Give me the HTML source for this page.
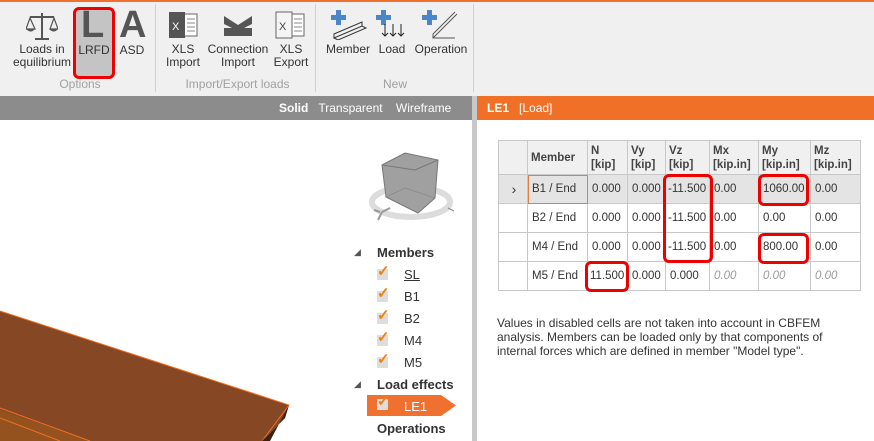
<!DOCTYPE html>
<html><head><meta charset="utf-8"><style>
*{margin:0;padding:0;box-sizing:border-box}
body{width:874px;height:441px;overflow:hidden;background:#fff;font-family:"Liberation Sans",sans-serif;font-size:12px;color:#333;position:relative}
.a{position:absolute}
.tb{left:0;top:0;width:874px;height:96px;background:#f0f0f0;border-top:2px solid #f07030}
.lbl{position:absolute;text-align:center;font-size:12px;color:#333;line-height:13px;white-space:nowrap}
.grp{position:absolute;top:77px;font-size:12px;color:#a0a0a0;text-align:center}
.sep{position:absolute;top:4px;width:1px;height:88px;background:#d0d0d0}
table{border-collapse:collapse;position:absolute;left:498px;top:140px;font-size:11.5px;table-layout:fixed;width:362px}
td{border:1px solid #c8c8c8;padding:0 2px 0 4px;height:29px;white-space:nowrap;color:#333;overflow:hidden}
th{border:1px solid #c8c8c8;background:#f0f0f0;text-align:left;padding:2px 3px;font-weight:bold;color:#444;height:34px;line-height:14px;font-size:11.5px;overflow:hidden;white-space:nowrap}
.sel td{background:#e4e4e4}
.i{color:#999;font-style:italic}
.r{position:absolute;border:3px solid #e00;border-radius:6px}
.tree{position:absolute;font-size:13px;color:#333}
.cb{position:absolute;width:11px;height:11px;background:#ddd;border-radius:1px}
.ck{position:absolute;color:#f08010;font-size:15px;font-weight:bold;line-height:14px}
</style></head><body>
<div class="a tb"></div>
<svg class="a" style="left:26px;top:12px" width="32" height="30" viewBox="0 0 32 30"><g stroke="#555" stroke-width="2" fill="none"><line x1="16" y1="1" x2="16" y2="27"/><line x1="4" y1="5" x2="28" y2="5"/><line x1="9" y1="27" x2="23" y2="27"/><path d="M4 6 L0 17 H9 Z M28 6 L24 17 H32 Z" stroke-width="1.2"/></g><path d="M0 17 H9 Q5 22 0 17 Z M23 17 H32 Q28 22 23 17Z" fill="#555"/></svg>
<div class="lbl" style="left:10px;top:43px;width:64px">Loads in<br>equilibrium</div>
<div class="a" style="left:73px;top:7px;width:42px;height:72px;background:#c4c4c4;border:3px solid #e00;border-radius:6px"></div>
<div class="a" style="left:81px;top:4px;font-size:38px;font-weight:bold;color:#555">L</div>
<div class="lbl" style="left:76px;top:44px;width:36px">LRFD</div>
<div class="a" style="left:119px;top:4px;font-size:38px;font-weight:bold;color:#555">A</div>
<div class="lbl" style="left:118px;top:44px;width:28px">ASD</div>
<div class="grp" style="left:40px;width:80px">Options</div>
<div class="sep" style="left:155px"></div>
<svg class="a" style="left:167px;top:11px" width="32" height="28"><rect x="10" y="3" width="20" height="22" fill="#fff" stroke="#666"/><g stroke="#888"><line x1="20" y1="8" x2="28" y2="8"/><line x1="20" y1="12" x2="28" y2="12"/><line x1="20" y1="16" x2="28" y2="16"/><line x1="20" y1="20" x2="28" y2="20"/></g><rect x="2" y="1" width="16" height="26" fill="#555"/><text x="5" y="19" fill="#fff" font-size="11" font-family="Liberation Sans">X</text></svg>
<div class="lbl" style="left:163px;top:43px;width:40px">XLS<br>Import</div>
<svg class="a" style="left:222px;top:14px" width="32" height="22"><path d="M2 2 L16 11 L30 2 L30 10 L16 17 L2 10Z" fill="#555"/><rect x="2" y="14" width="28" height="8" fill="#555"/></svg>
<div class="lbl" style="left:205px;top:43px;width:66px">Connection<br>Import</div>
<svg class="a" style="left:274px;top:11px" width="32" height="28"><rect x="10" y="3" width="20" height="22" fill="#fff" stroke="#666"/><g stroke="#888"><line x1="20" y1="8" x2="28" y2="8"/><line x1="20" y1="12" x2="28" y2="12"/><line x1="20" y1="16" x2="28" y2="16"/><line x1="20" y1="20" x2="28" y2="20"/></g><rect x="2" y="1" width="16" height="26" fill="#f4f4f4" stroke="#666"/><text x="5" y="19" fill="#444" font-size="11" font-family="Liberation Sans">X</text></svg>
<div class="lbl" style="left:271px;top:43px;width:40px">XLS<br>Export</div>
<div class="grp" style="left:175px;width:125px">Import/Export loads</div>
<div class="sep" style="left:315px"></div>
<svg class="a" style="left:330px;top:8px" width="40" height="32"><path d="M6 2h5v5h5v5h-5v5h-5v-5h-5v-5h5z" fill="#4a86c8"/><path d="M4 30 L32 18 L36 20 L8 32Z M4 30 L4 26 L32 14 L32 18" fill="none" stroke="#333"/></svg>
<div class="lbl" style="left:324px;top:43px;width:48px">Member</div>
<svg class="a" style="left:375px;top:8px" width="32" height="32"><path d="M6 2h5v5h5v5h-5v5h-5v-5h-5v-5h5z" fill="#4a86c8"/><g stroke="#222" fill="none"><path d="M10 16v12M7 25l3 3 3-3M18 16v12M15 25l3 3 3-3M26 16v12M23 25l3 3 3-3"/></g></svg>
<div class="lbl" style="left:376px;top:43px;width:32px">Load</div>
<svg class="a" style="left:421px;top:8px" width="40" height="32"><path d="M6 2h5v5h5v5h-5v5h-5v-5h-5v-5h5z" fill="#4a86c8"/><path d="M12 30 L36 6 M12 26 L34 4 M12 26 V30 H34" fill="none" stroke="#555"/></svg>
<div class="lbl" style="left:413px;top:43px;width:56px">Operation</div>
<div class="grp" style="left:370px;width:50px">New</div>
<div class="sep" style="left:473px"></div>
<div class="a" style="left:0;top:96px;width:472px;height:24px;background:#8c8c8c"></div>
<div class="a" style="left:279px;top:101px;color:#fff;font-size:12px;white-space:nowrap"><b>Solid</b>&nbsp;&nbsp;&nbsp;Transparent&nbsp;&nbsp;&nbsp;&nbsp;Wireframe</div>
<div class="a" style="left:472px;top:96px;width:5px;height:345px;background:#c8c8c8"></div>
<div class="a" style="left:477px;top:96px;width:397px;height:24px;background:#f07028"></div>
<div class="a" style="left:487px;top:101px;color:#fff;font-size:12px"><b>LE1</b>&nbsp;&nbsp;&nbsp;[Load]</div>
<svg class="a" style="left:0;top:300px" width="300" height="141"><polygon points="0,11 289,105 285,118 262,141 0,141" fill="#864824"/><polyline points="0,11 289,105 262,141" fill="none" stroke="#f07020" stroke-width="1"/><polygon points="289,105 285,118 262,141 270,141" fill="#3a2010"/><polygon points="0,110 90,141 0,141" fill="#94521f"/><line x1="0" y1="108" x2="90" y2="141" stroke="#f07020"/><line x1="0" y1="118" x2="60" y2="141" stroke="#f07020"/></svg>
<svg class="a" style="left:368px;top:150px" width="92" height="80"><ellipse cx="43" cy="52" rx="39" ry="15" fill="none" stroke="#dcdcdc" stroke-width="6"/><polygon points="14,15 37,3 70,10 67,48 50,63 18,47" fill="#a0a0a0" stroke="#777"/><polyline points="14,15 47,20 70,10 M47,20 L50,63" fill="none" stroke="#777"/><polyline points="18,47 37,38 67,48 M37,3 L37,38" fill="none" stroke="#888" stroke-width="0.7"/><path d="M14 62 L10 70 M14 62 L22 58 M12 62 L6 60" stroke="#999" stroke-width="2"/><line x1="80" y1="58" x2="86" y2="61" stroke="#888"/></svg>
<div class="a" style="left:354px;top:247px;font-size:9px;color:#555">◢</div>
<div class="tree" style="left:377px;top:245px;font-weight:bold">Members</div>
<div class="cb" style="left:377px;top:269px"></div><div class="ck" style="left:377px;top:265px">✓</div><div class="tree" style="left:404px;top:267px;text-decoration:underline">SL</div>
<div class="cb" style="left:377px;top:291px"></div><div class="ck" style="left:377px;top:287px">✓</div><div class="tree" style="left:404px;top:289px">B1</div>
<div class="cb" style="left:377px;top:313px"></div><div class="ck" style="left:377px;top:309px">✓</div><div class="tree" style="left:404px;top:311px">B2</div>
<div class="cb" style="left:377px;top:335px"></div><div class="ck" style="left:377px;top:331px">✓</div><div class="tree" style="left:404px;top:333px">M4</div>
<div class="cb" style="left:377px;top:357px"></div><div class="ck" style="left:377px;top:353px">✓</div><div class="tree" style="left:404px;top:355px">M5</div>
<div class="a" style="left:354px;top:379px;font-size:9px;color:#555">◢</div>
<div class="tree" style="left:377px;top:377px;font-weight:bold">Load effects</div>
<svg class="a" style="left:367px;top:395px" width="90" height="21"><polygon points="0,0 74,0 89,10.5 74,21 0,21" fill="#f07030"/></svg>
<div class="cb" style="left:377px;top:399px"></div><div class="ck" style="left:377px;top:395px">✓</div><div class="tree" style="left:404px;top:399px;color:#fff">LE1</div>
<div class="tree" style="left:377px;top:421px;font-weight:bold">Operations</div>
<table>
<colgroup><col style="width:29px"><col style="width:60px"><col style="width:40px"><col style="width:38px"><col style="width:44px"><col style="width:49px"><col style="width:52px"><col style="width:50px"></colgroup>
<tr><th></th><th>Member</th><th>N<br>[kip]</th><th>Vy<br>[kip]</th><th>Vz<br>[kip]</th><th>Mx<br>[kip.in]</th><th>My<br>[kip.in]</th><th>Mz<br>[kip.in]</th></tr>
<tr class="sel"><td style="text-align:center;font-size:14px">›</td><td style="outline:1px solid #e08040;outline-offset:-1px">B1 / End</td><td>0.000</td><td>0.000</td><td style="padding-left:2px">-11.500</td><td>0.00</td><td>1060.00</td><td>0.00</td></tr>
<tr><td></td><td>B2 / End</td><td>0.000</td><td>0.000</td><td style="padding-left:2px">-11.500</td><td>0.00</td><td>0.00</td><td>0.00</td></tr>
<tr><td></td><td>M4 / End</td><td>0.000</td><td>0.000</td><td style="padding-left:2px">-11.500</td><td>0.00</td><td>800.00</td><td>0.00</td></tr>
<tr><td></td><td>M5 / End</td><td style="padding-left:2px">11.500</td><td>0.000</td><td>0.000</td><td class="i">0.00</td><td class="i">0.00</td><td class="i">0.00</td></tr>
</table>
<div class="r" style="left:663px;top:174px;width:50px;height:89px"></div>
<div class="r" style="left:758px;top:174px;width:51px;height:32px"></div>
<div class="r" style="left:758px;top:233px;width:51px;height:31px"></div>
<div class="r" style="left:585px;top:261px;width:44px;height:31px"></div>
<div class="a" style="left:497px;top:316px;width:330px;font-size:12px;line-height:14px;color:#333">Values in disabled cells are not taken into account in CBFEM analysis. Members can be loaded only by that components of internal forces which are defined in member "Model type".</div>
</body></html>
